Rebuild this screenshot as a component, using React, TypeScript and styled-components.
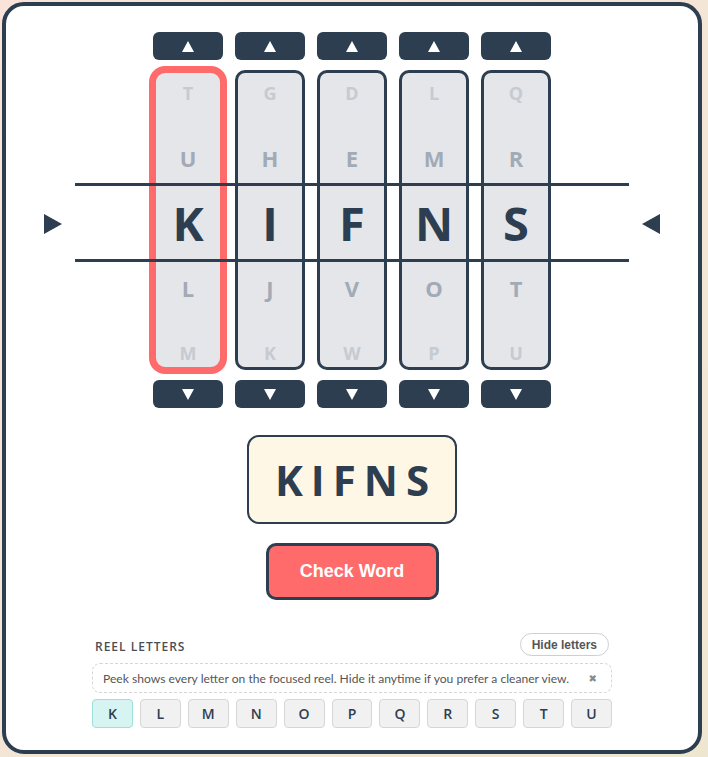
import React, { useState } from 'react'
import styled, { createGlobalStyle } from 'styled-components'

const GlobalStyle = createGlobalStyle`
  html, body {
    margin: 0;
    padding: 0;
  }
  body {
    padding: 2px;
    min-height: 757px;
    box-sizing: border-box;
    background: linear-gradient(135deg, #fae3d8 0%, #f3e6d6 55%, #efe6d0 100%);
    font-family: "Open Sans", "Liberation Sans", sans-serif;
  }
`

const reels = [
  ['T', 'U', 'K', 'L', 'M'],
  ['G', 'H', 'I', 'J', 'K'],
  ['D', 'E', 'F', 'V', 'W'],
  ['L', 'M', 'N', 'O', 'P'],
  ['Q', 'R', 'S', 'T', 'U'],
]

const chipLetters = ['K', 'L', 'M', 'N', 'O', 'P', 'Q', 'R', 'S', 'T', 'U']

const App = () => {
  const [focused] = useState<number>(0)
  const [showNote, setShowNote] = useState<boolean>(true)
  const word = reels.map((r) => r[2]).join('')

  return (
    <>
      <GlobalStyle />
      <Card>
        <MachineRow>
          <Pointer dir="right" />
          <Stage>
            {reels.map((letters, i) => (
              <Column key={i}>
                <ArrowButton aria-label="Spin up">
                  <Tri dir="up" />
                </ArrowButton>
                <Reel focused={i === focused}>
                  <Strip>
                    {letters.map((l, j) => (
                      <Slot key={j} level={Math.abs(j - 2)}>
                        {l}
                      </Slot>
                    ))}
                  </Strip>
                </Reel>
                <ArrowButton aria-label="Spin down">
                  <Tri dir="down" />
                </ArrowButton>
              </Column>
            ))}
            <PayLine top={151} />
            <PayLine top={227} />
          </Stage>
          <Pointer dir="left" />
        </MachineRow>

        <WordBox>{word}</WordBox>
        <CheckButton>Check Word</CheckButton>

        <LettersSection>
          <SectionHead>
            <SectionTitle>Reel Letters</SectionTitle>
            <PillButton>Hide letters</PillButton>
          </SectionHead>
          {showNote && (
            <Notice>
              <span>Peek shows every letter on the focused reel. Hide it anytime if you prefer a cleaner view.</span>
              <CloseX onClick={() => setShowNote(false)}>✖</CloseX>
            </Notice>
          )}
          <ChipGrid>
            {chipLetters.map((l, i) => (
              <Chip key={l} active={i === 0}>
                {l}
              </Chip>
            ))}
          </ChipGrid>
        </LettersSection>
      </Card>
    </>
  )
}

export default App

const Card = styled.div`
  width: 700px;
  box-sizing: border-box;
  background: #ffffff;
  border: 4px solid #2d3e50;
  border-radius: 22px;
  padding: 26px 0 22px;
  display: flex;
  flex-direction: column;
  align-items: center;
`

const MachineRow = styled.div`
  display: flex;
  align-items: center;
  gap: 13px;
`

const Pointer = styled.div<{ dir: 'left' | 'right' }>`
  width: 0;
  height: 0;
  margin-top: 8px;
  border-top: 10px solid transparent;
  border-bottom: 10px solid transparent;
  ${(p) =>
    p.dir === 'right'
      ? 'border-left: 18px solid #2d3e50;'
      : 'border-right: 18px solid #2d3e50;'}
`

const Stage = styled.div`
  position: relative;
  width: 554px;
  display: flex;
  justify-content: center;
  gap: 12px;
`

const PayLine = styled.div<{ top: number }>`
  position: absolute;
  left: 0;
  right: 0;
  top: ${(p) => p.top}px;
  height: 3px;
  background: #2d3e50;
  z-index: 2;
  pointer-events: none;
`

const Column = styled.div`
  display: flex;
  flex-direction: column;
  gap: 10px;
  width: 70px;
`

const ArrowButton = styled.button`
  height: 28px;
  width: 70px;
  border: none;
  border-radius: 6px;
  background: #2d3e50;
  display: flex;
  align-items: center;
  justify-content: center;
  padding: 0;
  cursor: pointer;
`

const Tri = styled.span<{ dir: 'up' | 'down' }>`
  width: 0;
  height: 0;
  border-left: 6px solid transparent;
  border-right: 6px solid transparent;
  ${(p) =>
    p.dir === 'up'
      ? 'border-bottom: 11px solid #ffffff;'
      : 'border-top: 11px solid #ffffff;'}
`

const Reel = styled.div<{ focused: boolean }>`
  height: 300px;
  box-sizing: border-box;
  border: 3px solid ${(p) => (p.focused ? '#ff6b6b' : '#2d3e50')};
  box-shadow: ${(p) => (p.focused ? '0 0 0 4px #ff6b6b' : 'none')};
  border-radius: ${(p) => (p.focused ? '12px' : '10px')};
  background: #e4e6ea;
  overflow: hidden;
  display: flex;
  flex-direction: column;
  justify-content: center;
`

const Strip = styled.div`
  display: flex;
  flex-direction: column;
  transform: translateY(3px);
`

const Slot = styled.div<{ level: number }>`
  height: 65px;
  flex-shrink: 0;
  display: flex;
  align-items: center;
  justify-content: center;
  font-weight: 700;
  font-size: ${(p) => (p.level === 0 ? '47px' : p.level === 1 ? '22px' : '18px')};
  color: ${(p) => (p.level === 0 ? '#2d3e50' : p.level === 1 ? '#a2aab5' : '#c6cad1')};
`

const WordBox = styled.div`
  margin-top: 27px;
  height: 89px;
  box-sizing: border-box;
  padding: 0 18px 0 26px;
  display: flex;
  align-items: center;
  justify-content: center;
  min-width: 209px;
  background: #fef7e6;
  border: 2px solid #2d3e50;
  border-radius: 12px;
  font-size: 42px;
  font-weight: 700;
  letter-spacing: 8px;
  color: #2d3e50;
`

const CheckButton = styled.button`
  margin-top: 19px;
  width: 173px;
  height: 57px;
  background: #ff6b6b;
  border: 3px solid #2d3e50;
  border-radius: 10px;
  color: #ffffff;
  font-family: "Liberation Sans", Arial, sans-serif;
  font-size: 18px;
  font-weight: 700;
  cursor: pointer;
`

const LettersSection = styled.div`
  margin-top: 33px;
  width: 520px;
  display: flex;
  flex-direction: column;
`

const SectionHead = styled.div`
  display: flex;
  align-items: center;
  justify-content: space-between;
  padding-left: 3px;
`

const SectionTitle = styled.div`
  text-transform: uppercase;
  font-size: 12px;
  font-weight: 600;
  letter-spacing: 1px;
  color: #4a4f56;
  padding-top: 3px;
`

const PillButton = styled.button`
  height: 23px;
  padding: 0 11px;
  margin-right: 3px;
  background: #ffffff;
  border: 1px solid #cfcfcf;
  border-radius: 12px;
  font-family: "Liberation Sans", Arial, sans-serif;
  font-size: 12px;
  font-weight: 700;
  color: #555555;
  cursor: pointer;
`

const Notice = styled.div`
  margin-top: 7px;
  height: 30px;
  box-sizing: border-box;
  border: 1px dashed #d6d6d6;
  border-radius: 8px;
  padding: 0 14px 0 10px;
  display: flex;
  align-items: center;
  justify-content: space-between;
  font-family: Lato, "Open Sans", sans-serif;
  font-size: 12.1px;
  color: #555555;
  white-space: nowrap;
`

const CloseX = styled.span`
  font-family: "DejaVu Sans", sans-serif;
  font-size: 10px;
  color: #8a8a8a;
  cursor: pointer;
`

const ChipGrid = styled.div`
  margin-top: 6px;
  display: grid;
  grid-template-columns: repeat(11, 1fr);
  gap: 7px;
`

const Chip = styled.button<{ active: boolean }>`
  height: 29px;
  padding: 0;
  border-radius: 4px;
  border: 1px solid ${(p) => (p.active ? '#9fe0da' : '#d6d6d6')};
  background: ${(p) => (p.active ? '#d6f4f1' : '#f1f1f1')};
  font-family: "Open Sans", sans-serif;
  font-size: 14px;
  font-weight: 600;
  color: #2d3e50;
  cursor: pointer;
`
